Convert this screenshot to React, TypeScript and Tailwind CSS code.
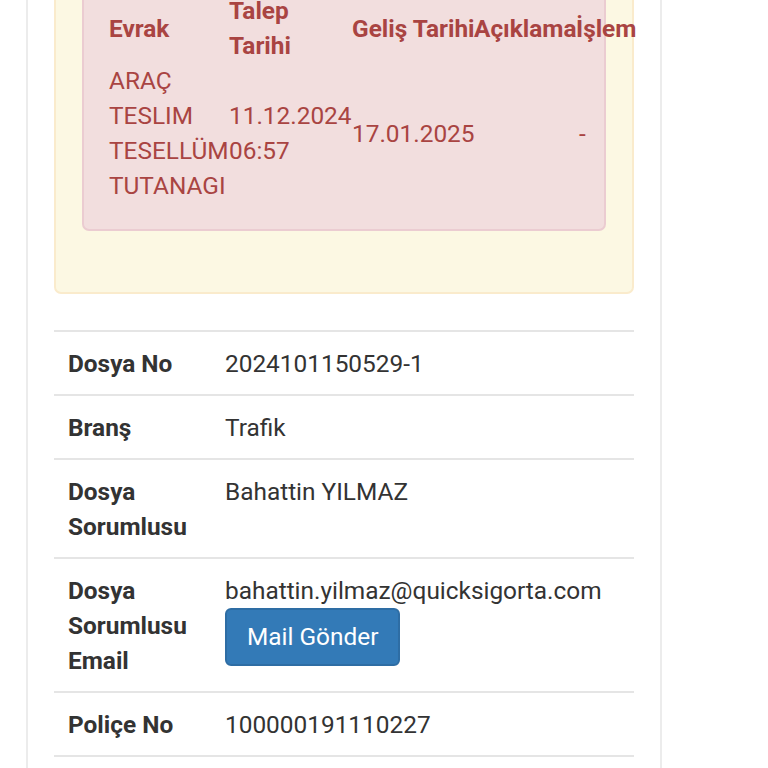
import React from 'react';

const evrakRows = [
  {
    evrak: 'ARAÇ TESLIM TESELLÜM TUTANAGI',
    talep: '11.12.2024 06:57',
    gelis: '17.01.2025',
    aciklama: '',
    islem: '-',
  },
];

const details: { label: string; value: string; mail?: boolean }[] = [
  { label: 'Dosya No', value: '2024101150529-1' },
  { label: 'Branş', value: 'Trafik' },
  { label: 'Dosya Sorumlusu', value: 'Bahattin YILMAZ' },
  { label: 'Dosya Sorumlusu Email', value: 'bahattin.yilmaz@quicksigorta.com', mail: true },
  { label: 'Poliçe No', value: '100000191110227' },
];

const App = () => {
  return (
    <div
      className="h-[768px] w-[768px] overflow-hidden bg-white text-[24.4px] leading-[35px] text-[#333]"
      style={{ fontFamily: 'Roboto, "Liberation Sans", sans-serif' }}
    >
      <div className="-mt-[63px] ml-[26px] w-[636px] border-x-2 border-[#ececec] px-[26px]">
        {/* Warning box with missing documents */}
        <div className="mb-[36px] rounded-[7px] border-2 border-[#faebcc] bg-[#fcf8e3] p-[26px]">
          <div className="mb-[35px] rounded-[7px] border-2 border-[#ebccd1] bg-[#f2dede] py-[26px] pl-[25px] pr-[26px] text-[#a94442]">
            <table className="w-[530px] table-fixed border-collapse">
              <colgroup>
                <col className="w-[120px]" />
                <col className="w-[123px]" />
                <col className="w-[122px]" />
                <col className="w-[102px]" />
                <col className="w-[63px]" />
              </colgroup>
              <thead>
                <tr>
                  <th className="p-0 text-left align-middle font-bold">Evrak</th>
                  <th className="p-0 text-left align-middle font-bold">Talep Tarihi</th>
                  <th className="whitespace-nowrap p-0 text-left align-middle font-bold">Geliş Tarihi</th>
                  <th className="whitespace-nowrap p-0 text-left align-middle font-bold">Açıklama</th>
                  <th className="whitespace-nowrap p-0 text-left align-middle font-bold">İşlem</th>
                </tr>
              </thead>
              <tbody>
                {evrakRows.map((r, i) => (
                  <tr key={i}>
                    <td className="p-0 align-middle">{r.evrak}</td>
                    <td className="p-0 align-middle">{r.talep}</td>
                    <td className="p-0 align-middle">{r.gelis}</td>
                    <td className="p-0 align-middle">{r.aciklama}</td>
                    <td className="p-0 pl-[3px] align-middle">{r.islem}</td>
                  </tr>
                ))}
              </tbody>
            </table>
          </div>
        </div>

        {/* File details */}
        <table className="w-full table-fixed border-collapse border-b-2 border-[#e5e5e5]">
          <colgroup>
            <col className="w-[157px]" />
            <col />
          </colgroup>
          <tbody>
            {details.map((d) => (
              <tr key={d.label} className="border-t-2 border-[#e5e5e5]">
                <th className="px-[14px] py-[13.5px] text-left align-top font-bold">{d.label}</th>
                <td className="px-[14px] py-[13.5px] align-top">
                  <div>{d.value}</div>
                  {d.mail && (
                    <button className="rounded-[6px] border-2 border-[#2e6da4] bg-[#337ab7] px-[20px] py-[10px] leading-[34px] text-white">
                      Mail Gönder
                    </button>
                  )}
                </td>
              </tr>
            ))}
          </tbody>
        </table>
        <div className="h-[40px]" />
      </div>
    </div>
  );
};

export default App;
